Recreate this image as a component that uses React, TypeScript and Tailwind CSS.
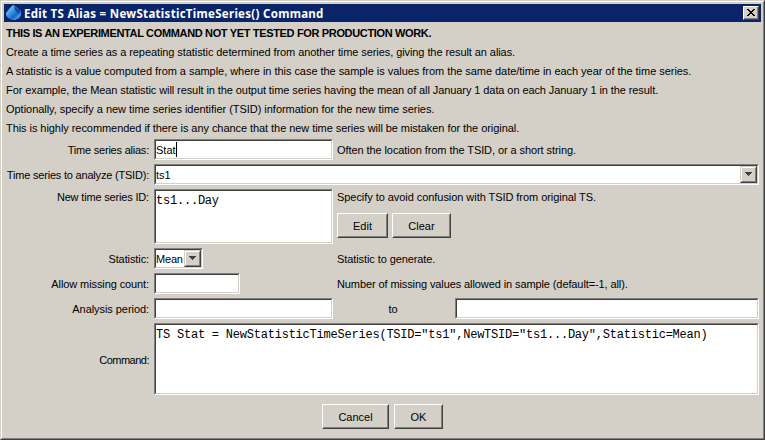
import type { ReactNode } from "react";

const SUNKEN =
  "border border-t-[#808080] border-l-[#808080] border-r-white border-b-white";
const SUNKEN_INNER =
  "h-full w-full border border-t-[#404040] border-l-[#404040] border-r-[#d4d0c8] border-b-[#d4d0c8] bg-white";

function Field({ size, inner = "", children }: { size: string; inner?: string; children?: ReactNode }) {
  return (
    <div className={`${SUNKEN} shrink-0 ${size}`}>
      <div className={`${SUNKEN_INNER} flex whitespace-pre ${inner}`}>{children}</div>
    </div>
  );
}

function Button({ size, children }: { size: string; children: ReactNode }) {
  return (
    <button
      type="button"
      className={`shrink-0 border border-t-white border-l-white border-r-[#404040] border-b-[#404040] ${size}`}
    >
      <span className="flex h-full w-full items-center justify-center border border-t-[#d4d0c8] border-l-[#d4d0c8] border-r-[#808080] border-b-[#808080] bg-[#d4d0c8] pt-[2px]">
        {children}
      </span>
    </button>
  );
}

function Arrow({ size }: { size: string }) {
  return (
    <span className={`shrink-0 border border-t-[#d4d0c8] border-l-[#d4d0c8] border-r-[#404040] border-b-[#404040] ${size}`}>
      <span className="flex h-full w-full items-center justify-center border border-t-white border-l-white border-r-[#808080] border-b-[#808080] bg-[#d4d0c8]">
        <svg width="7" height="4" shapeRendering="crispEdges" className="-mt-px">
          <path d="M0 0h7v1H0zM1 1h5v1H1zM2 2h3v1H2zM3 3h1v1H3z" fill="#404040" />
        </svg>
      </span>
    </span>
  );
}

function Label({ children, tracking = "" }: { children: ReactNode; tracking?: string }) {
  return (
    <div className="mr-[5px] flex h-[21px] w-[143px] shrink-0 items-center justify-end pt-[2px]">
      <span className={tracking}>{children}</span>
    </div>
  );
}

function Note({ children, tracking = "" }: { children: ReactNode; tracking?: string }) {
  return <span className={`ml-1 pt-[2px] ${tracking}`}>{children}</span>;
}

export default function App() {
  return (
    <div className="h-[440px] w-[765px] overflow-hidden border border-t-[#d4d0c8] border-l-[#d4d0c8] border-r-[#404040] border-b-[#404040] bg-[#d4d0c8] font-['Liberation_Sans',Arial,sans-serif] text-[11px] leading-[19px] whitespace-nowrap text-black">
      <div className="h-full w-full border border-t-white border-l-white border-r-[#808080] border-b-[#808080]">
        <header className="mx-[2px] mt-[2px] flex h-[18px] w-[757px] items-center bg-[#0a246a] pr-[2px] pl-[2px]">
          <svg width="16" height="16" viewBox="0 0 16 16" className="shrink-0">
            <defs>
              <linearGradient id="drop" x1="0" y1="0" x2="1" y2="1">
                <stop offset="0" stopColor="#b8e4fa" />
                <stop offset="0.4" stopColor="#3f9be8" />
                <stop offset="0.65" stopColor="#1464cc" />
                <stop offset="1" stopColor="#a0d4f8" />
              </linearGradient>
            </defs>
            <path d="M7 0L9 1L15 6V10L13 13L9 15H6L2 13L0 10V8L4 3Z" fill="url(#drop)" />
            <path d="M8 1L14 6L13 9L9 5Z" fill="#0b49a8" />
          </svg>
          <span className="ml-[2px] flex-1 font-['Noto_Sans',sans-serif] text-[11.5px] font-bold tracking-[0.29px] text-white">
            Edit TS Alias = NewStatisticTimeSeries() Command
          </span>
          <button
            type="button"
            className="h-[14px] w-4 border border-t-white border-l-white border-r-[#404040] border-b-[#404040]"
          >
            <span className="flex h-full w-full items-center justify-center border-r border-b border-[#808080] bg-[#d4d0c8]">
              <svg width="8" height="7" shapeRendering="crispEdges">
                <path
                  d="M0 0h2v1H0zM6 0h2v1H6zM1 1h2v1H1zM5 1h2v1H5zM2 2h4v1H2zM3 3h2v1H3zM2 4h4v1H2zM1 5h2v1H1zM5 5h2v1H5zM0 6h2v1H0zM6 6h2v1H6z"
                  fill="#000"
                />
              </svg>
            </span>
          </button>
        </header>

        <main className="flex flex-col pt-[2px] pl-1">
          <p className="h-[19px] font-bold tracking-[-0.343px]">
            THIS IS AN EXPERIMENTAL COMMAND NOT YET TESTED FOR PRODUCTION WORK.
          </p>
          <p className="h-[19px] tracking-[-0.08px]">
            Create a time series as a repeating statistic determined from another time series, giving the result an alias.
          </p>
          <p className="h-[19px] tracking-[-0.043px]">
            A statistic is a value computed from a sample, where in this case the sample is values from the same date/time in each year of the time series.
          </p>
          <p className="h-[19px] tracking-[-0.085px]">
            For example, the Mean statistic will result in the output time series having the mean of all January 1 data on each January 1 in the result.
          </p>
          <p className="h-[19px] tracking-[-0.033px]">
            Optionally, specify a new time series identifier (TSID) information for the new time series.
          </p>
          <p className="h-[19px] tracking-[-0.06px]">
            This is highly recommended if there is any chance that the new time series will be mistaken for the original.
          </p>

          <div className="mt-[1px] flex flex-col gap-1">
            <div className="flex items-center">
              <Label tracking="tracking-[-0.22px]">Time series alias:</Label>
              <Field size="h-[21px] w-[179px]" inner="items-center">
                <span className="pt-[2px]">Stat</span>
                <span className="h-[15px] w-px bg-black" />
              </Field>
              <Note tracking="tracking-[-0.08px]">Often the location from the TSID, or a short string.</Note>
            </div>

            <div className="flex items-center">
              <Label tracking="tracking-[-0.2px]">Time series to analyze (TSID):</Label>
              <Field size="h-[21px] w-[605px]" inner="items-center justify-between">
                <span className="pt-[2px]">ts1</span>
                <Arrow size="h-[17px] w-[17px]" />
              </Field>
            </div>

            <div className="flex items-start">
              <div className="-mt-[3px]">
                <Label tracking="tracking-[-0.17px]">New time series ID:</Label>
              </div>
              <Field
                size="h-[55px] w-[179px]"
                inner="pt-px font-['Liberation_Mono',monospace] text-[12px] tracking-[-0.22px]"
              >
                <span>ts1...Day</span>
              </Field>
              <div className="-mt-[3px] flex flex-col">
                <Note tracking="tracking-[-0.055px]">Specify to avoid confusion with TSID from original TS.</Note>
                <div className="mt-[6px] ml-1 flex gap-1">
                  <Button size="h-[25px] w-[51px]">Edit</Button>
                  <Button size="h-[25px] w-[59px]">Clear</Button>
                </div>
              </div>
            </div>

            <div className="flex items-center">
              <Label tracking="tracking-[-0.1px]">Statistic:</Label>
              <div className="w-[179px]">
                <Field size="h-[21px] w-[49px]" inner="items-center justify-between">
                  <span className="pt-[2px] tracking-[-0.2px]">Mean</span>
                  <Arrow size="h-[17px] w-[17px]" />
                </Field>
              </div>
              <Note tracking="tracking-[-0.09px]">Statistic to generate.</Note>
            </div>

            <div className="flex items-center">
              <Label tracking="tracking-[-0.1px]">Allow missing count:</Label>
              <div className="w-[179px]">
                <Field size="h-[21px] w-[86px]" />
              </div>
              <Note tracking="tracking-[-0.1px]">Number of missing values allowed in sample (default=-1, all).</Note>
            </div>

            <div className="flex items-center">
              <Label tracking="tracking-[-0.06px]">Analysis period:</Label>
              <Field size="h-[21px] w-[179px]" />
              <span className="w-[122px] pt-[2px] pr-[2px] text-center">to</span>
              <Field size="h-[21px] w-[304px]" />
            </div>

            <div className="flex items-center">
              <Label tracking="tracking-[-0.5px]">Command:</Label>
              <Field
                size="h-[72px] w-[605px]"
                inner="pt-px font-['Liberation_Mono',monospace] text-[12px] tracking-[-0.22px]"
              >
                <span>{'TS Stat = NewStatisticTimeSeries(TSID="ts1",NewTSID="ts1...Day",Statistic=Mean)'}</span>
              </Field>
            </div>
          </div>

          <div className="mt-[9px] ml-[316px] flex gap-[5px]">
            <Button size="h-[25px] w-[67px]">Cancel</Button>
            <Button size="h-[25px] w-[49px]">OK</Button>
          </div>
        </main>
      </div>
    </div>
  );
}
